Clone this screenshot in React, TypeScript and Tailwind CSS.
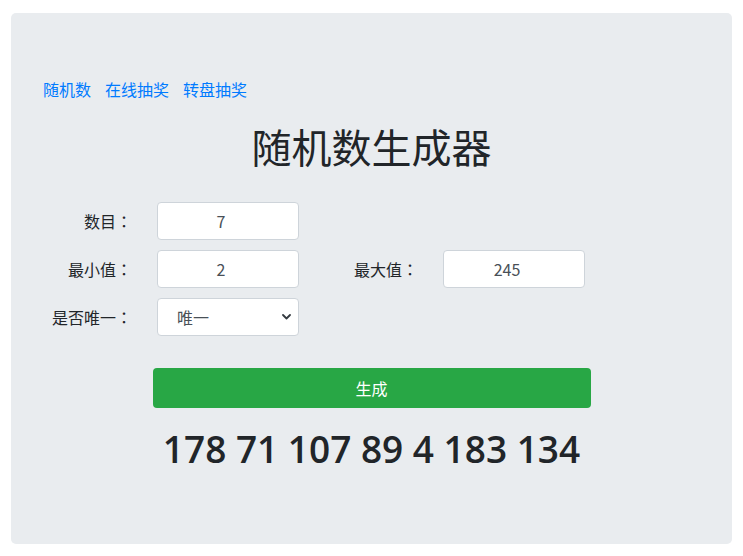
import React from "react";

const font = { fontFamily: '"Noto Sans CJK SC", "Open Sans", sans-serif' };
const colonFont = { fontFamily: '"Noto Sans CJK TC", "Noto Sans CJK SC", sans-serif' };
const numFont = { fontFamily: '"Open Sans", "Noto Sans CJK SC", sans-serif' };

function Label({ text, w }: { text: string; w: string }) {
  return (
    <div className={`${w} text-right text-[16px] leading-6 text-[#212529]`}>
      {text}
      <span style={colonFont}>：</span>
    </div>
  );
}

function NumInput({ value }: { value: string }) {
  return (
    <input
      readOnly
      value={value}
      className="w-[142px] h-[38px] rounded-[4px] border border-[#ced4da] bg-white pr-[14px] text-center text-[16px] text-[#495057] outline-none"
      style={font}
    />
  );
}

export default function App() {
  return (
    <div className="min-h-[556px] bg-white pt-[13px] px-[11px]" style={font}>
      <div className="w-[721px] h-[531px] rounded-[5px] bg-[#e9ecef] flex flex-col">
        <div className="mt-[64px] ml-[32px] flex gap-[14px] text-[16px] leading-6 text-[#007bff]">
          <span>随机数</span>
          <span>在线抽奖</span>
          <span>转盘抽奖</span>
        </div>
        <h1 className="mt-[21px] text-center text-[40px] leading-[48px] font-normal text-[#212529]">随机数生成器</h1>
        <div className="mt-[32px] flex flex-col gap-[10px]">
          <div className="flex items-center">
            <Label text="数目" w="w-[121px]" />
            <div className="ml-[25px]"><NumInput value="7" /></div>
          </div>
          <div className="flex items-center">
            <Label text="最小值" w="w-[121px]" />
            <div className="ml-[25px]"><NumInput value="2" /></div>
            <Label text="最大值" w="w-[119px]" />
            <div className="ml-[25px]"><NumInput value="245" /></div>
          </div>
          <div className="flex items-center">
            <Label text="是否唯一" w="w-[121px]" />
            <div className="ml-[25px] relative w-[142px] h-[38px] rounded-[4px] border border-[#ced4da] bg-white flex items-center">
              <span className="ml-[19px] text-[16px] text-[#495057]">唯一</span>
              <svg className="absolute right-[7px] top-[15px]" width="9" height="6" viewBox="0 0 9 6">
                <path d="M1 1 L4.5 4.5 L8 1" fill="none" stroke="#343a40" strokeWidth="1.8" strokeLinecap="round" strokeLinejoin="round" />
              </svg>
            </div>
          </div>
        </div>
        <div className="mt-[32px] flex justify-center">
          <button className="w-[438px] h-[40px] rounded-[4px] bg-[#28a745] text-white text-[16px]">生成</button>
        </div>
        <div className="mt-[19px] text-center text-[37px] leading-[44px] font-semibold text-[#212529]" style={numFont}>
          178 71 107 89 4 183 134
        </div>
      </div>
    </div>
  );
}
